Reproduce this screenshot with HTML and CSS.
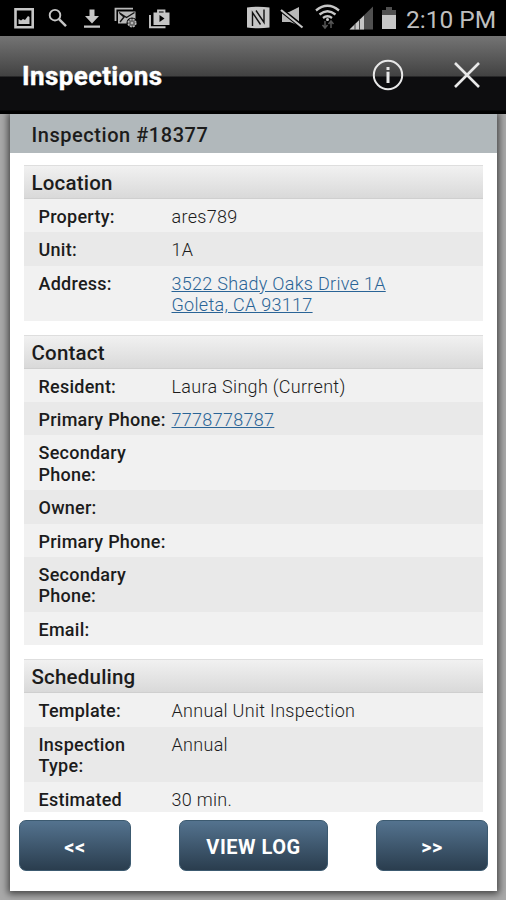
FILE: index.html
```html
<!DOCTYPE html>
<html lang="en">
<head>
    <meta charset="UTF-8">
    <meta name="viewport" content="width=device-width, initial-scale=1.0">
    <title>Inspections</title>
    <link rel="stylesheet" href="styles.css">
</head>
<body>
    <div class="status-bar">
        <svg class="status-icons" width="180" height="36" viewBox="0 0 180 36">
            <!-- picture -->
            <path d="M15.500 9.200h17.200v18H15.500z" fill="none" stroke="#c6c6c6" stroke-width="2.600"/>
            <path d="M18.500 24v-5l2.500 1.500 2-1.500 2 1 3-4 1.500 1V24z" fill="#c6c6c6"/>
            <!-- search -->
            <circle cx="55" cy="15.200" r="5.300" fill="none" stroke="#c6c6c6" stroke-width="1.900"/>
            <path d="M59 19.200l7 7" stroke="#c6c6c6" stroke-width="2.400"/>
            <!-- download -->
            <path d="M89.500 9.500h5V16h4.500l-7 7.500-7-7.500h4.500zM84 25.500h16v2.300H84z" fill="#c6c6c6"/>
            <!-- mail -->
            <path d="M115.500 21V8.700H133" fill="none" stroke="#b8b8b8" stroke-width="1.800"/>
            <path d="M118 11.500h17.500V23.500H118z" fill="#b8b8b8"/>
            <path d="M119 12.500l7.500 5 8-5M120 22l4-5-4-3.500" fill="none" stroke="#111" stroke-width="1.400"/>
            <circle cx="132" cy="23" r="5.500" fill="#000"/>
            <circle cx="132" cy="23" r="3.800" fill="#666" stroke="#b8b8b8" stroke-width="1.600" stroke-dasharray="2 1"/>
            <circle cx="132" cy="23" r="1.300" fill="#b8b8b8"/>
            <!-- work bag -->
            <path d="M150 15v12.300h15.500" fill="none" stroke="#c6c6c6" stroke-width="1.900"/>
            <path d="M153.500 12.500h16V25h-16z" fill="#c6c6c6"/>
            <path d="M158 13v-2.500h6.500V13" fill="none" stroke="#c6c6c6" stroke-width="1.800"/>
            <path d="M159.500 15l5 3.500-5 3.500z" fill="#000"/>
        </svg>
        <svg class="signal-icons" width="156" height="36" viewBox="244 0 156 36">
            <!-- nfc -->
            <path d="M247 7.500q11-1.500 22.500 0v20q-11 1.500-22.500 0z" fill="#c6c6c6"/>
            <path d="M252.500 26V12.500l8 12M256 10.500l8 12V9.500" fill="none" stroke="#111" stroke-width="1.400"/>
            <!-- muted speaker -->
            <path d="M282 12h7l10-5v18.500l-9-3.500h-8z" fill="#b8b8b8"/>
            <path d="M280 9l23 18.500" stroke="#000" stroke-width="4.600"/>
            <path d="M281 10l21.500 17.500" stroke="#c6c6c6" stroke-width="2.200"/>
            <!-- wifi -->
            <path d="M316 10.500q11.500-9.500 23 0M319.500 14.500q8-6.500 16 0M323 18q4.500-3.500 9 0" fill="none" stroke="#c6c6c6" stroke-width="2.300"/>
            <circle cx="327.500" cy="19.500" r="1.500" fill="#c6c6c6"/>
            <path d="M325 21v7M322.500 25l2.500 3 2.500-3M331 28v-7M328.500 24l2.500-3 2.500 3" fill="none" stroke="#555" stroke-width="1.500"/>
            <!-- signal -->
            <path d="M349.500 29.500L373 6.500v23z" fill="#505050"/>
            <path d="M349.500 29.500L364 15.500v14z" fill="#c6c6c6"/>
            <path d="M355 24v6M359.500 19v11" stroke="#444" stroke-width="1"/>
            <!-- battery -->
            <path d="M382 10h4V7h6v3h4v6h-14z" fill="#505050"/>
            <path d="M382 15h14v14h-14z" fill="#c6c6c6"/>
        </svg>
        <span class="clock">2:10 PM</span>
    </div>

    <div class="title-bar">
        <h1 class="title">Inspections</h1>
        <svg class="info-btn" width="32" height="32" viewBox="0 0 32 32">
            <circle cx="16" cy="16" r="14.200" fill="none" stroke="#e8e8e8" stroke-width="2"/>
            <path d="M16 12.800v11.200M16 8v3" stroke="#e8e8e8" stroke-width="3"/>
        </svg>
        <svg class="close-btn" width="28" height="28" viewBox="0 0 28 28">
            <path d="M2 2l24 24M26 2L2 26" stroke="#e8e8e8" stroke-width="2.600"/>
        </svg>
    </div>

    <div class="page">
        <div class="panel">
            <h2 class="panel-title">Inspection #18377</h2>
            <div class="panel-body">
                <div class="section">
                    <h3 class="section-title">Location</h3>
                    <div class="row">
                        <div class="label">Property:</div>
                        <div class="value">ares789</div>
                    </div>
                    <div class="row">
                        <div class="label">Unit:</div>
                        <div class="value">1A</div>
                    </div>
                    <div class="row">
                        <div class="label">Address:</div>
                        <div class="value"><a class="link" href="#">3522 Shady Oaks Drive 1A<br>Goleta, CA 93117</a></div>
                    </div>
                </div>

                <div class="section">
                    <h3 class="section-title">Contact</h3>
                    <div class="row">
                        <div class="label">Resident:</div>
                        <div class="value">Laura Singh (Current)</div>
                    </div>
                    <div class="row">
                        <div class="label">Primary Phone:</div>
                        <div class="value"><a class="link" href="#">7778778787</a></div>
                    </div>
                    <div class="row">
                        <div class="label">Secondary<br>Phone:</div>
                    </div>
                    <div class="row">
                        <div class="label">Owner:</div>
                    </div>
                    <div class="row">
                        <div class="label">Primary Phone:</div>
                    </div>
                    <div class="row">
                        <div class="label">Secondary<br>Phone:</div>
                    </div>
                    <div class="row">
                        <div class="label">Email:</div>
                    </div>
                </div>

                <div class="section">
                    <h3 class="section-title">Scheduling</h3>
                    <div class="row">
                        <div class="label">Template:</div>
                        <div class="value">Annual Unit Inspection</div>
                    </div>
                    <div class="row">
                        <div class="label">Inspection<br>Type:</div>
                        <div class="value">Annual</div>
                    </div>
                    <div class="row">
                        <div class="label">Estimated</div>
                        <div class="value">30 min.</div>
                    </div>
                </div>
            </div>
            <div class="buttons">
                <button class="btn">&lt;&lt;</button>
                <button class="btn btn-wide">VIEW LOG</button>
                <button class="btn">&gt;&gt;</button>
            </div>
        </div>
    </div>
</body>
</html>
```

FILE: styles.css
```css
* {
    margin: 0;
    padding: 0;
    box-sizing: border-box;
}

body {
    height: 900px;
    display: flex;
    flex-direction: column;
    overflow: hidden;
    font-family: Roboto, sans-serif;
    background-color: #a9a9a9;
    color: #1c1c1c;
}

.status-bar {
    height: 36px;
    flex: none;
    display: flex;
    background-color: #000;
}

.status-icons {
    margin-right: 64px;
    flex: none;
}

.signal-icons {
    flex: none;
}

.clock {
    margin-left: 6px;
    font-size: 24.5px;
    line-height: 39px;
    color: #bebebe;
    white-space: nowrap;
}

.title-bar {
    position: relative;
    z-index: 1;
    height: 78px;
    flex: none;
    display: flex;
    align-items: center;
    padding: 0 25px 0 22px;
    background: linear-gradient(#747474, #424242 40px, #0d0d0f 41px, #0d0d0f 74px, #000 75px);
}

.title {
    flex: 1;
    padding-top: 2px;
    font-size: 26px;
    font-weight: bold;
    letter-spacing: 0.4px;
    color: #fff;
    -webkit-text-stroke: 0.4px #fff;
}

.info-btn {
    margin-right: 49px;
}

.page {
    flex: 1;
    padding: 0 9px 9px 10px;
}

.panel {
    height: 777px;
    background-color: #fff;
    box-shadow: 0 1px 7px 2px rgba(0, 0, 0, 0.6);
}

.panel-title {
    height: 39px;
    padding-left: 21.5px;
    font-size: 20px;
    font-weight: 500;
    line-height: 42px;
    background-color: #b1b8bb;
    letter-spacing: 0.55px;
}

.panel-body {
    height: 659px;
    padding: 12px 14px 0;
    overflow: hidden;
}

.section {
    margin-bottom: 14px;
}

.section-title {
    height: 34px;
    padding-left: 7.5px;
    font-size: 20.5px;
    font-weight: 500;
    line-height: 34px;
    letter-spacing: 0.2px;
    border-top: 1px solid #dedede;
    border-bottom: 1px solid #cfcfcf;
    background: linear-gradient(#f1f1f1, #d9d9d9);
}

.row {
    display: flex;
    padding: 7px 0 5px 14.5px;
    font-size: 18px;
    line-height: 21.4px;
    background-color: #f1f1f1;
}

.row:nth-child(odd) {
    background-color: #e9e9e9;
}

.label {
    width: 133px;
    flex: none;
    font-weight: 500;
    letter-spacing: 0.25px;
    white-space: nowrap;
}

.value {
    font-weight: 300;
    letter-spacing: 0.3px;
}

.link {
    color: #2a6496;
    text-decoration: underline;
}

.buttons {
    display: flex;
    justify-content: space-between;
    padding: 8px 9px 0;
}

.btn {
    width: 112px;
    height: 51px;
    padding-top: 2px;
    font-family: Roboto, sans-serif;
    font-size: 20px;
    font-weight: bold;
    letter-spacing: 0.5px;
    color: #fff;
    border: 1px solid #3c5a70;
    border-radius: 7px;
    background: linear-gradient(#54738f, #2a3d4e);
}

.btn-wide {
    width: 149px;
}
```
